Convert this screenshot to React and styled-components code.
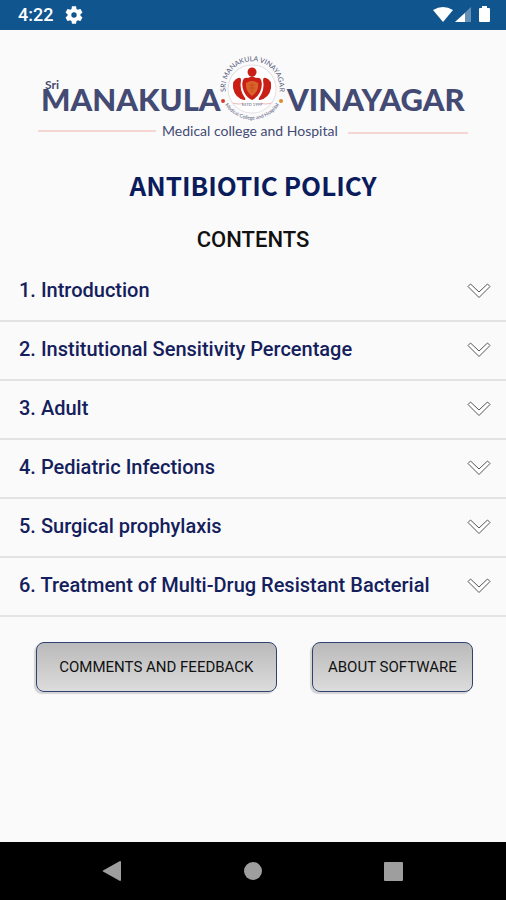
import React from "react";
import styled, { createGlobalStyle } from "styled-components";

const sections = [
  "1. Introduction",
  "2. Institutional Sensitivity Percentage",
  "3. Adult",
  "4. Pediatric Infections",
  "5. Surgical prophylaxis",
  "6. Treatment of Multi-Drug Resistant Bacterial",
];

const StatusIcons = () => (
  <svg width="58" height="20" viewBox="0 0 58 20" fill="#fff" aria-hidden="true">
    <path d="M0 5Q10 -1 20 5L10 17Z" />
    <path d="M38 2V17H22Z" opacity="0.35" />
    <path d="M32 8V17H22Z" />
    <path d="M49 3V1H54V3H56Q57 3 57 4V16Q57 17 56 17H47Q46 17 46 16V4Q46 3 47 3Z" />
  </svg>
);

const GearIcon = () => (
  <svg width="18" height="18" viewBox="2 2 20 20" fill="#fff" aria-hidden="true">
    <path d="M19.14 12.94c.04-.3.06-.61.06-.94 0-.32-.02-.64-.07-.94l2.03-1.58c.18-.14.23-.41.12-.61l-1.92-3.32c-.12-.22-.37-.29-.59-.22l-2.39.96c-.5-.38-1.03-.7-1.62-.94l-.36-2.54c-.04-.24-.24-.41-.48-.41h-3.84c-.24 0-.43.17-.47.41l-.36 2.54c-.59.24-1.13.57-1.62.94l-2.39-.96c-.22-.08-.47 0-.59.22L2.74 8.87c-.12.21-.08.47.12.61l2.03 1.58c-.05.3-.09.63-.09.94s.02.64.07.94l-2.03 1.58c-.18.14-.23.41-.12.61l1.92 3.32c.12.22.37.29.59.22l2.39-.96c.5.38 1.03.7 1.62.94l.36 2.54c.05.24.24.41.48.41h3.84c.24 0 .44-.17.47-.41l.36-2.54c.59-.24 1.13-.56 1.62-.94l2.39.96c.22.08.47 0 .59-.22l1.92-3.32c.12-.22.07-.47-.12-.61l-2.01-1.58zM12 15a3 3 0 1 1 0-6 3 3 0 0 1 0 6z" />
  </svg>
);

const Logo = () => (
  <LogoSvg viewBox="0 0 430 88" role="img" aria-label="Sri Manakula Vinayagar Medical college and Hospital">
    <defs>
      <path id="ringTop" d="M189 43A27 27 0 1 1 240 43" />
      <path id="ringBottom" d="M185 47A32 32 0 0 0 243 47" />
    </defs>
    <LogoText x="7" y="35" $size={12} $weight={700}>Sri</LogoText>
    <LogoText x="3" y="57" $size={31} $weight={900}>MANAKULA</LogoText>
    <LogoText x="249" y="57" $size={31} $weight={900}>VINAYAGAR</LogoText>
    <circle cx="214" cy="35" r="24" fill="#fff" stroke="#e3dfe6" />
    <RingText $size={7}>
      <textPath href="#ringTop" startOffset="50%">SRI MANAKULA VINAYAGAR</textPath>
    </RingText>
    <RingText $size={5}>
      <textPath href="#ringBottom" startOffset="50%">Medical College and Hospital</textPath>
    </RingText>
    <circle cx="185" cy="47" r="2" fill="#d63a2c" />
    <circle cx="243" cy="47" r="2" fill="#e08a2e" />
    <g fill="#c91f16">
      <circle cx="214" cy="18" r="4.500" />
      <path d="M205 26Q206 23 210 24L214 22L218 24Q222 23 223 26Q225 31 222 38Q219 44 214 46Q209 44 206 38Q203 31 205 26Z" />
      <path d="M200 24Q194 26 195 34Q197 44 206 46Q208 46 207 44Q201 36 203 26Q203 23 200 24Z" />
      <path d="M228 24Q234 26 233 34Q231 44 222 46Q220 46 221 44Q227 36 225 26Q225 23 228 24Z" />
    </g>
    <path d="M208 29Q214 25 220 29Q221 37 214 42Q207 37 208 29Z" fill="#d9642a" />
    <path d="M211 31H217M211 34H217M214 29V38" stroke="#c94a22" fill="none" />
    <path d="M195 49Q202 51 205 49M223 49Q227 51 233 49" stroke="#efb9b3" fill="none" />
    <RingText x="214" y="52" $size={4}>ESTD 1999</RingText>
    <path d="M0 77H118M310 79H430" stroke="#f0b2ac" />
    <LogoText x="124" y="82" $size={14} $weight={400}>Medical college and Hospital</LogoText>
  </LogoSvg>
);

const Chevron = () => (
  <svg width="24" height="16" viewBox="0 0 24 16" aria-hidden="true">
    <path
      d="M3.500 1L12 9L20.500 1L23 3.500L12 14.500L1 3.500Z"
      fill="#fff"
      stroke="#555"
      strokeLinejoin="round"
    />
  </svg>
);

const App = () => {
  return (
    <>
      <GlobalStyle />
      <Screen>
        <StatusBar>
          <Clock>4:22</Clock>
          <GearIcon />
          <StatusRight>
            <StatusIcons />
          </StatusRight>
        </StatusBar>
        <Content>
          <Logo />
          <Title>ANTIBIOTIC POLICY</Title>
          <Subtitle>CONTENTS</Subtitle>
          <SectionList>
            {sections.map((section) => (
              <li key={section}>
                <SectionButton type="button">
                  {section}
                  <Chevron />
                </SectionButton>
              </li>
            ))}
          </SectionList>
          <Actions>
            <ActionButton type="button" $grow={3}>
              COMMENTS AND FEEDBACK
            </ActionButton>
            <ActionButton type="button" $grow={2}>
              ABOUT SOFTWARE
            </ActionButton>
          </Actions>
        </Content>
        <NavBar>
          <NavButton type="button" aria-label="Back">
            <svg width="20" height="20" viewBox="0 0 20 20" fill="#9e9e9e">
              <path d="M18 0Q19 0 19 1V19Q19 20 18 20L1 10.500Q0 10 1 9.500Z" />
            </svg>
          </NavButton>
          <NavButton type="button" aria-label="Home">
            <svg width="20" height="20" viewBox="0 0 20 20" fill="#9e9e9e">
              <circle cx="10" cy="10" r="9" />
            </svg>
          </NavButton>
          <NavButton type="button" aria-label="Recent apps">
            <svg width="20" height="20" viewBox="0 0 20 20" fill="#9e9e9e">
              <rect width="19" height="19" y="1" rx="1" />
            </svg>
          </NavButton>
        </NavBar>
      </Screen>
    </>
  );
};

export default App;

const GlobalStyle = createGlobalStyle`
  * {
    box-sizing: border-box;
  }

  body {
    margin: 0;
    background-color: #fafafa;
    font-family: Roboto, "Liberation Sans", sans-serif;
  }

  button {
    font-family: inherit;
    cursor: pointer;
  }
`;

const Screen = styled.div`
  display: flex;
  flex-direction: column;
  min-height: 100vh;
`;

const StatusBar = styled.header`
  display: flex;
  align-items: center;
  gap: 12px;
  height: 30px;
  padding: 0 15px 0 18px;
  background-color: #11558f;
  color: #fff;
`;

const Clock = styled.span`
  font-size: 18px;
  font-weight: 500;
  line-height: 30px;
`;

const StatusRight = styled.div`
  display: flex;
  margin-left: auto;
`;

const Content = styled.main`
  display: flex;
  flex: 1;
  flex-direction: column;
  padding-top: 24px;
`;

const LogoSvg = styled.svg`
  align-self: center;
  width: 85%;
`;

const LogoText = styled.text`
  fill: #434a73;
  font-family: Lato, "Open Sans", sans-serif;
  font-size: ${(props) => props.$size}px;
  font-weight: ${(props) => props.$weight};
`;

const RingText = styled.text`
  fill: #55597a;
  font-family: Lato, "Open Sans", sans-serif;
  font-size: ${(props) => props.$size}px;
  text-anchor: middle;
`;

const Title = styled.h1`
  margin: 23px 0 0;
  color: #0b1c5c;
  font-family: "Noto Sans CJK JP", "Noto Sans", sans-serif;
  font-size: 26px;
  font-weight: 700;
  line-height: 40px;
  text-align: center;
`;

const Subtitle = styled.h2`
  margin: 21px 0 9px;
  color: #111;
  font-size: 22px;
  font-weight: 500;
  line-height: 28px;
  text-align: center;
`;

const SectionList = styled.ul`
  margin: 0;
  padding: 0;
  list-style: none;
`;

const SectionButton = styled.button`
  display: flex;
  align-items: center;
  justify-content: space-between;
  width: 100%;
  padding: 14px 15px 16px 19px;
  border: none;
  border-bottom: 2px solid #e3e3e3;
  background: none;
  color: #14205c;
  font-size: 20px;
  font-weight: 500;
  line-height: 27px;
  text-align: left;
`;

const Actions = styled.div`
  display: flex;
  gap: 35px;
  padding: 25px 33px 25px 36px;
`;

const ActionButton = styled.button`
  flex: ${(props) => props.$grow} 1 0;
  padding: 0;
  border: 1px solid #2f4272;
  border-radius: 8px;
  background: linear-gradient(#bababa, #dcdcdc);
  box-shadow: -2px 2px 1px #d4d4d4;
  color: #111;
  font-size: 15px;
  line-height: 48px;
  white-space: nowrap;
`;

const NavBar = styled.nav`
  display: flex;
  align-items: center;
  justify-content: center;
  gap: 93px;
  height: 58px;
  background-color: #000;
`;

const NavButton = styled.button`
  display: flex;
  align-items: center;
  justify-content: center;
  width: 48px;
  height: 48px;
  padding: 0;
  border: none;
  background: none;
`;
